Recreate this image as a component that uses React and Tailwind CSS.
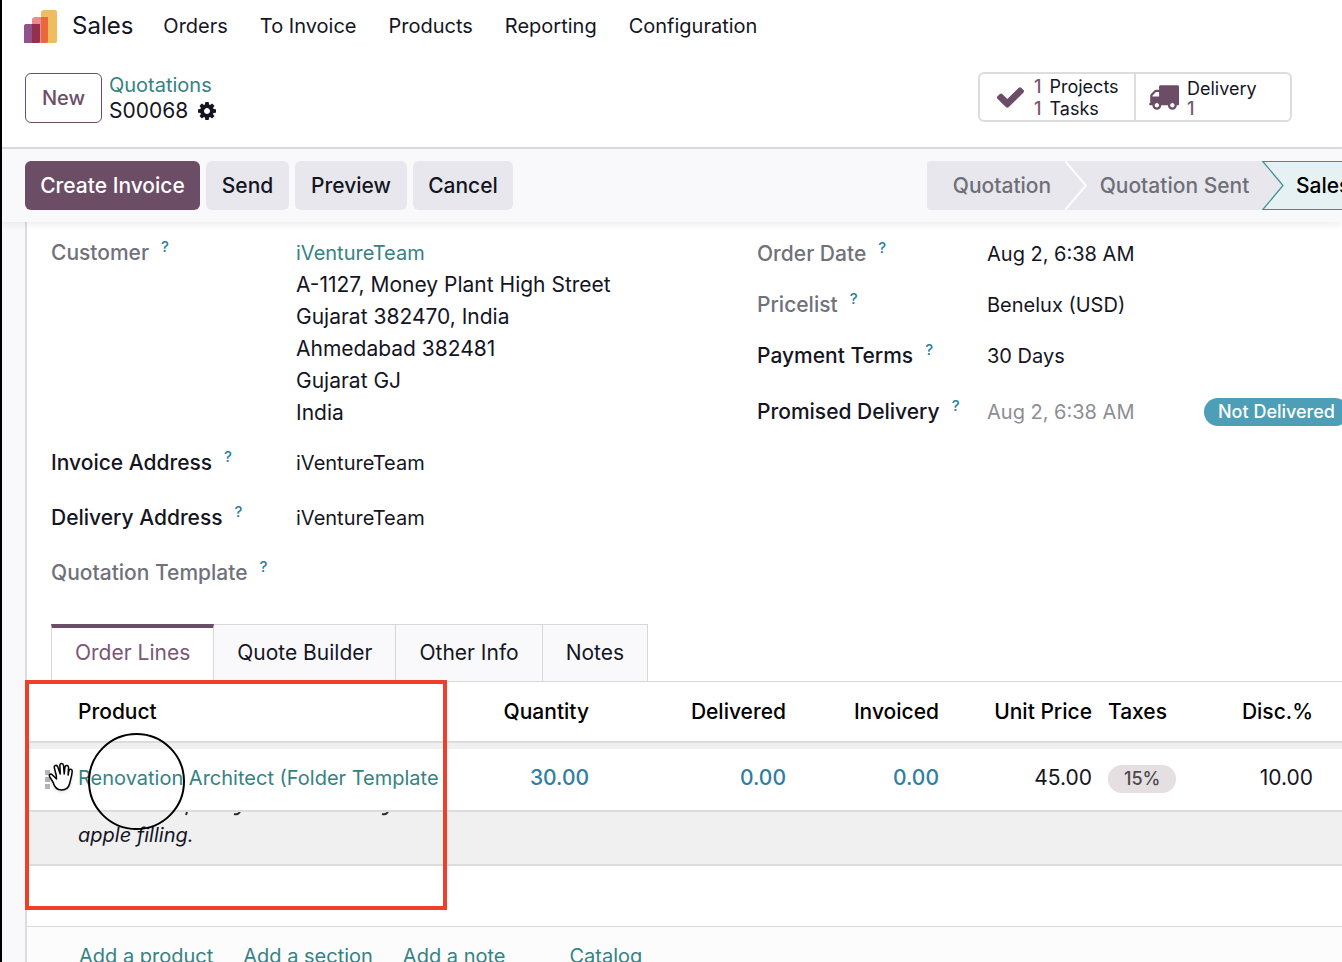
import { useState } from 'react'

const MENU = ['Orders', 'To Invoice', 'Products', 'Reporting', 'Configuration']
const TABS = ['Order Lines', 'Quote Builder', 'Other Info', 'Notes']
const ADDRESS = [
  'A-1127, Money Plant High Street',
  'Gujarat 382470, India',
  'Ahmedabad 382481',
  'Gujarat GJ',
  'India',
]

function Logo() {
  return (
    <svg viewBox="0 0 33 33" className="w-[33px] h-[33px] shrink-0" aria-hidden="true">
      <path d="M17 3a3 3 0 0 1 3-3h11a2 2 0 0 1 2 2v29a2 2 0 0 1-2 2H17z" fill="#f0bd5e" />
      <path d="M8 10a3 3 0 0 1 3-3h13v24a2 2 0 0 1-2 2H8z" fill="#ec8b8f" />
      <path d="M17 7h7v24a2 2 0 0 1-2 2h-5z" fill="#e8683a" />
      <path d="M0 16a2 2 0 0 1 2-2h14v17a2 2 0 0 1-2 2H0z" fill="#8f5389" />
      <path d="M8 14h8v17a2 2 0 0 1-2 2H8z" fill="#952f4e" />
    </svg>
  )
}

function Cog() {
  return (
    <svg viewBox="128 128 1536 1536" className="w-[18px] h-[18px]" fill="currentColor" aria-hidden="true">
      <path d="M1152 896q0-106-75-181t-181-75-181 75-75 181 75 181 181 75 181-75 75-181zm512-109v222q0 12-8 23t-20 13l-185 28q-19 54-39 91 35 50 107 138 10 12 10 25t-9 23q-27 37-99 108t-94 71q-12 0-26-9l-138-108q-44 23-91 38-16 136-29 186-7 28-36 28h-222q-14 0-24.5-8.5t-11.5-21.5l-28-184q-49-16-90-37l-141 107q-10 9-25 9-14 0-25-11-126-114-165-168-7-10-7-23 0-12 8-23 15-21 51-66.5t54-70.5q-27-50-41-99l-183-27q-13-2-21-12.5t-8-23.5v-222q0-12 8-23t19-13l186-28q14-46 39-92-40-57-107-138-10-12-10-24 0-10 9-23 26-36 98.5-107.5t94.5-71.5q13 0 26 10l138 107q44-23 91-38 16-136 29-186 7-28 36-28h222q14 0 24.5 8.5t11.5 21.5l28 184q49 16 90 37l142-107q9-9 24-9 13 0 25 10 129 119 165 170 7 8 7 22 0 12-8 23-15 21-51 66.5t-54 70.5q26 50 41 98l183 28q13 2 21 12.5t8 23.5z" />
    </svg>
  )
}

function Check() {
  return (
    <svg viewBox="121 334 1550 1188" className="w-[27px] h-[21px] shrink-0" fill="#6c4d66" aria-hidden="true">
      <path d="M1671 566q0 40-28 68l-724 724-136 136q-28 28-68 28t-68-28l-136-136-362-362q-28-28-28-68t28-68l136-136q28-28 68-28t68 28l294 295 656-657q28-28 68-28t68 28l136 136q28 28 28 68z" />
    </svg>
  )
}

function Truck() {
  return (
    <svg viewBox="0 256 1792 1408" className="w-[31px] h-[25px] shrink-0" fill="#6c4d66" aria-hidden="true">
      <path d="M640 1408q0-52-38-90t-90-38-90 38-38 90 38 90 90 38 90-38 38-90zm-384-512h384v-256h-158q-13 0-22 9l-195 195q-9 9-9 22v30zm1280 512q0-52-38-90t-90-38-90 38-38 90 38 90 90 38 90-38 38-90zm256-1088v1024q0 15-4 26.5t-13.5 18.5-16.5 11.5-23.5 6-22.5 2-25.5 0-22.5-.5q0 106-75 181t-181 75-181-75-75-181h-384q0 106-75 181t-181 75-181-75-75-181h-64q-3 0-22.5.5t-25.5 0-22.5-2-23.5-6-16.5-11.5-13.5-18.5-4-26.5q0-26 19-45t45-19v-320q0-8-.5-35t0-38 2.5-34.5 6.5-37 14-30.5 22.5-30l198-198q19-19 50.5-32t58.5-13h160v-192q0-26 19-45t45-19h1024q26 0 45 19t19 45z" />
    </svg>
  )
}

// Separator between two stages; the active one gets the teal notch
function StageArrow({ active }) {
  return (
    <svg viewBox="0 0 22 49" className="w-[22px] h-[49px] shrink-0" aria-hidden="true">
      <rect width="22" height="49" fill="#e7e7ed" />
      {active && <path d="M0 .5H22V48.500H0L21 24.500z" fill="#e6f1f3" />}
      <path
        d={active ? 'M22 .5H.8L21 24.500.8 48.500H22' : 'M0 0l21 24.500L0 49'}
        fill="none"
        stroke={active ? '#3f8d8f' : '#ffffff'}
        strokeWidth={active ? 1.2 : 2}
      />
    </svg>
  )
}

function GrabHand() {
  return (
    <svg viewBox="0 0 26 31" className="absolute left-[21px] top-[80px] w-[26px] h-[31px] drop-shadow" aria-hidden="true">
      <path
        d="M8.500 17 4.500 13C2.500 11 .5 12.500 1.800 14.800L5.200 20.500C6.500 25.500 8.500 28 13.500 28 18.500 28 20.800 25.500 21.800 21 22.500 17.500 24 13.500 24.200 9.300 24.300 6.500 21.300 6.500 20.900 8.800L20.100 13 20.500 5.600C20.700 3 17.500 2.600 17 5L16.200 12 15.500 3.500C15.200.8 11.800.9 11.900 3.500L12.200 12 9.700 4.800C8.900 2.500 5.900 3.200 6.300 5.600L8.300 13.500z"
        fill="#fff"
        stroke="#000"
        strokeWidth="1.500"
        strokeLinejoin="round"
      />
    </svg>
  )
}

function FieldLabel({ children, muted }) {
  return (
    <div className={`flex items-center gap-3 text-[21px] font-medium whitespace-nowrap ${muted ? 'text-[#71717b]' : 'text-[#15151f]'}`}>
      <span>{children}</span>
      <sup className="text-[15px] leading-4 top-0 -mt-3 text-[#2b7f9e]">?</sup>
    </div>
  )
}

function Field({ label, muted, className, labelWidth, children }) {
  return (
    <div className={`flex ${className}`}>
      <div className={`shrink-0 ${labelWidth}`}>
        <FieldLabel muted={muted}>{label}</FieldLabel>
      </div>
      {children}
    </div>
  )
}

function OrderTable() {
  return (
    <table className="w-full table-fixed border-collapse text-right text-[21px]">
      <colgroup>
        <col className="w-[43px]" />
        <col />
        <col className="w-[147px]" />
        <col className="w-[197px]" />
        <col className="w-[153px]" />
        <col className="w-[153px]" />
        <col className="w-[121px]" />
        <col className="w-[100px]" />
        <col className="w-[21px]" />
      </colgroup>
      <thead>
        <tr className="h-[60px] border-b-2 border-[#dcdcde] text-black">
          <th />
          <th className="px-2 text-left font-medium">Product</th>
          <th className="px-2 font-medium">Quantity</th>
          <th className="px-2 font-medium">Delivered</th>
          <th className="px-2 font-medium">Invoiced</th>
          <th className="px-2 font-medium whitespace-nowrap">Unit Price</th>
          <th className="px-2 text-left font-medium">Taxes</th>
          <th className="px-2 font-medium">Disc.%</th>
          <th />
        </tr>
      </thead>
      <tbody>
        <tr className="h-[7px] bg-[#f0f0f1]"><td colSpan={9} /></tr>
        <tr className="h-[62px] border-b-2 border-[#dcdcde]">
          <td>
            <svg viewBox="0 0 14 20" className="ml-[18px] w-[14px] h-5" fill="#b4b4b6" aria-hidden="true">
              <path d="M0 0h5v5H0zM0 7h5v5H0zM0 14h5v5H0z" />
            </svg>
          </td>
          <td className="px-2 pb-1 text-left text-[20px] overflow-hidden whitespace-nowrap">
            <a href="#product" className="text-[#368282]">Renovation Architect (Folder Template</a>
          </td>
          <td className="px-2 pb-1 font-medium text-[#2f7ea3]">30.00</td>
          <td className="px-2 pb-1 font-medium text-[#2f7ea3]">0.00</td>
          <td className="px-2 pb-1 font-medium text-[#2f7ea3]">0.00</td>
          <td className="px-2 pb-1">45.00</td>
          <td className="px-2 pb-1 text-left">
            <span className="inline-block rounded-full bg-[#e6dfe1] px-4 text-[18px] leading-7 font-medium text-[#4a4a4f]">15%</span>
          </td>
          <td className="px-2 pb-1">10.00</td>
          <td />
        </tr>
        <tr className="h-[54px] border-b-2 border-[#dcdcde] bg-[#f0f0f1]">
          <td />
          <td colSpan={8} className="px-2 text-left align-top text-[20px] leading-[30px] italic">
            {/* tails of the line hidden under the dragged row */}
            <svg viewBox="0 0 320 8" className="block w-[320px] h-2" fill="none" stroke="#2a2a33" strokeWidth="2" aria-hidden="true">
              <path d="M109 0l-1 3M156 2q4 1 6-2M304 2q4 1 6-2" />
            </svg>
            apple filling.
          </td>
        </tr>
      </tbody>
    </table>
  )
}

export default function App() {
  const [tab, setTab] = useState('Order Lines')

  return (
    <div className="flex h-screen flex-col overflow-hidden border-l-2 border-black bg-white font-[Inter,sans-serif] text-[20px] leading-8 text-[#15151f]">
      {/* Navbar */}
      <nav className="flex h-[52px] shrink-0 items-center pl-[22px] whitespace-nowrap">
        <Logo />
        <a href="#sales" className="ml-[15px] text-[24px]">Sales</a>
        <div className="ml-[30px] flex gap-8">
          {MENU.map(m => <a key={m} href="#menu">{m}</a>)}
        </div>
      </nav>

      {/* Control panel */}
      <header className="flex h-[97px] shrink-0 items-start justify-between border-b-2 border-[#dddde0] pt-5 pl-[23px] pr-[50px]">
        <div className="flex gap-[7px]">
          <button className="mt-px h-[50px] w-[77px] rounded-md border border-[#6c4d66] font-medium text-[#6c4d66]">New</button>
          <div className="leading-[26px]">
            <a href="#quotations" className="block text-[#368282]">Quotations</a>
            <div className="flex items-center gap-[10px]">
              <span className="text-[21px]">S00068</span>
              <button aria-label="Actions"><Cog /></button>
            </div>
          </div>
        </div>

        <div className="flex h-[50px] rounded-md border-2 border-[#dddde0] text-[18px] leading-[22px]">
          <button className="flex w-[156px] items-center gap-[10px] border-r-2 border-[#dddde0] pl-[17px] text-left whitespace-nowrap">
            <Check />
            <span className="pt-px">
              <span className="block"><span className="mr-2 font-medium text-[#7a5674]">1</span>Projects</span>
              <span className="block"><span className="mr-2 font-medium text-[#7a5674]">1</span>Tasks</span>
            </span>
          </button>
          <button className="flex w-[154px] items-center gap-2 pl-3 text-left leading-5">
            <Truck />
            <span className="pt-1">
              <span className="block">Delivery</span>
              <span className="block font-medium text-[#7a5674]">1</span>
            </span>
          </button>
        </div>
      </header>

      {/* Status bar */}
      <div className="relative z-10 flex h-[73px] shrink-0 items-center justify-between bg-[#f9f9fb] pl-[23px] text-[21px] font-medium whitespace-nowrap shadow-[0_2px_8px_rgba(0,0,0,0.08)]">
        <div className="flex gap-[6px]">
          <button className="h-[49px] w-[175px] rounded-md bg-[#6c4d66] text-white">Create Invoice</button>
          <button className="h-[49px] w-[83px] rounded-md bg-[#e7e7ed]">Send</button>
          <button className="h-[49px] w-[112px] rounded-md bg-[#e7e7ed]">Preview</button>
          <button className="h-[49px] w-[100px] rounded-md bg-[#e7e7ed]">Cancel</button>
        </div>
        <div className="flex w-[415px] shrink-0 overflow-hidden text-[#6f6f78]">
          <button className="h-[49px] w-[138px] shrink-0 rounded-l-sm bg-[#e7e7ed] pl-3">Quotation</button>
          <StageArrow />
          <button className="h-[49px] w-[175px] shrink-0 bg-[#e7e7ed]">Quotation Sent</button>
          <StageArrow active />
          <button className="h-[49px] w-[140px] shrink-0 border-y border-[#3f8d8f] bg-[#e6f1f3] pl-3 text-left text-black">Sales Order</button>
        </div>
      </div>

      {/* Sheet */}
      <div className="flex min-h-0 flex-1 bg-[#f9f9fb] pl-[23px]">
        <main className="flex min-w-0 flex-1 flex-col border-l-2 border-[#dddde0] bg-white">
          <div className="grid shrink-0 grid-cols-[706fr_585fr] pl-6">
            <div className="min-w-0 pt-[15px]">
              <Field label="Customer" muted labelWidth="w-[245px]" className="mb-[6px]">
                <div className="whitespace-nowrap">
                  <a href="#customer" className="text-[#368282]">iVentureTeam</a>
                  <div className="text-[21px]">
                    {ADDRESS.map(line => <div key={line}>{line}</div>)}
                  </div>
                </div>
              </Field>
              <Field label="Invoice Address" labelWidth="w-[245px]" className="h-[55px] items-center">
                <span>iVentureTeam</span>
              </Field>
              <Field label="Delivery Address" labelWidth="w-[245px]" className="h-[55px] items-center">
                <span>iVentureTeam</span>
              </Field>
              <Field label="Quotation Template" muted labelWidth="w-[245px]" className="h-[55px] items-center" />
            </div>

            <div className="min-w-0 overflow-hidden pt-[6px] whitespace-nowrap">
              <Field label="Order Date" muted labelWidth="w-[230px]" className="h-[51px] items-center">
                <span>Aug 2, 6:38 AM</span>
              </Field>
              <Field label="Pricelist" muted labelWidth="w-[230px]" className="h-[51px] items-center">
                <span>Benelux (USD)</span>
              </Field>
              <Field label="Payment Terms" labelWidth="w-[230px]" className="h-[51px] items-center">
                <span>30 Days</span>
              </Field>
              <Field label="Promised Delivery" labelWidth="w-[230px]" className="h-[61px] items-center">
                <span className="w-[217px] shrink-0 text-[#8e8e93]">Aug 2, 6:38 AM</span>
                <span className="shrink-0 rounded-full bg-[#4c9fb6] px-[14px] text-[18px] leading-7 font-medium text-white">Not Delivered</span>
              </Field>
            </div>
          </div>

          {/* Notebook tabs */}
          <div className="mt-6 flex h-[58px] shrink-0 border-b border-[#d8d8db] pl-6 text-[21px]" role="tablist">
            {TABS.map(t => (
              <button
                key={t}
                role="tab"
                aria-selected={t === tab}
                onClick={() => setTab(t)}
                className={`border-r border-[#d8d8db] px-[23px] ${
                  t === tab
                    ? 'border-l border-t-4 border-t-[#6c4d66] bg-white pb-[3px] text-[#7a5674]'
                    : 'border-t bg-[#f9f9fb]'
                }`}
              >
                {t}
              </button>
            ))}
          </div>

          <div className="relative shrink-0">
            <OrderTable />
            <GrabHand />
            <div className="absolute left-[61px] top-[51px] size-[97px] rounded-full border-2 border-black" />
            <div className="absolute -left-[2px] -top-[2px] h-[230px] w-[422px] border-4 border-[#ee4028]" />
          </div>

          <div className="mt-[60px] flex-1 border-t border-[#d8d8db] bg-[#fcfcfc] pt-[13px] pl-[52px] text-[#368282] whitespace-nowrap">
            <a href="#add-product">Add a product</a>
            <a href="#add-section" className="ml-[30px]">Add a section</a>
            <a href="#add-note" className="ml-[30px]">Add a note</a>
            <a href="#catalog" className="ml-16">Catalog</a>
          </div>
        </main>
      </div>
    </div>
  )
}
